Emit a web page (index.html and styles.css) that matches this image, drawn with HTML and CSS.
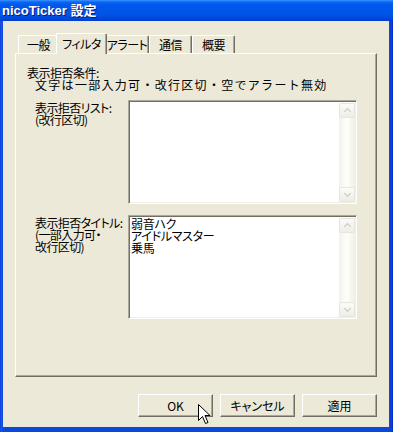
FILE: index.html
```html
<!DOCTYPE html>
<html lang="ja">

<head>
    <meta charset="UTF-8">
    <title>nicoTicker 設定</title>
    <link rel="stylesheet" href="styles.css">
</head>

<body>
    <div class="window">
        <div class="titlebar">nicoTicker 設定</div>

        <div class="client">
            <div class="tabs">
                <div class="tab tab-1">一般</div>
                <div class="tab tab-2 active">フィルタ</div>
                <div class="tab tab-3">アラート</div>
                <div class="tab tab-4">通信</div>
                <div class="tab tab-5">概要</div>
            </div>

            <div class="panel">
                <div class="cond">表示拒否条件:</div>
                <div class="cond-note">文字は一部入力可・改行区切・空でアラート無効</div>

                <div class="field first">
                    <label>表示拒否リスト:<br>(改行区切)</label>
                    <div class="textbox">
                        <div class="text"></div>
                        <div class="scroll">
                            <span class="arrow up"></span>
                            <span class="arrow down"></span>
                        </div>
                    </div>
                </div>

                <div class="field">
                    <label>表示拒否タイトル:<br>(一部入力可・<br>改行区切)</label>
                    <div class="textbox">
                        <div class="text">弱音ハク<br>アイドルマスター<br>乗馬</div>
                        <div class="scroll">
                            <span class="arrow up"></span>
                            <span class="arrow down"></span>
                        </div>
                    </div>
                </div>
            </div>

            <div class="buttons">
                <a class="btn" href="javascript:;">OK</a>
                <a class="btn" href="javascript:;">キャンセル</a>
                <a class="btn" href="javascript:;">適用</a>
            </div>
        </div>

        <!-- マウスカーソル -->
        <svg class="cursor" width="13" height="21" viewBox="0 0 13 21">
            <path d="M0.5 0.5 L0.5 16.5 L4.5 12.5 L7.5 19.5 L10 18.5 L7 11.5 L12 11.5 Z" fill="#fff" stroke="#000" stroke-width="1" stroke-linejoin="miter"/>
        </svg>
    </div>
</body>

</html>
```

FILE: styles.css
```css
* {
    margin: 0;
    padding: 0;
    box-sizing: border-box;
}

body {
    font-family: "Noto Sans CJK JP", sans-serif;
    font-size: 12px;
    line-height: 12px;
    color: #000;
    background: #fff;
    font-feature-settings: "palt";
    white-space: nowrap;
}

a {
    text-decoration: none;
    color: #000;
}

.window {
    position: relative;
    width: 393px;
    height: 432px;
    display: flex;
    flex-direction: column;
    background: linear-gradient(to right, #0831d9 0, #1a5ce6 1px, #0a49dc 3px, #0a49dc 389px, #0a3ed2 392px, #0019cf 393px);
}

.titlebar {
    height: 21px;
    padding-left: 2px;
    font-family: "Liberation Sans", "Noto Sans CJK JP", sans-serif;
    font-size: 13px;
    font-weight: bold;
    line-height: 22px;
    color: #fff;
    text-shadow: 1px 1px #0a1883;
    font-feature-settings: normal;
    background: linear-gradient(#3d95ff 0, #0a66f5 2px, #0058ee 5px, #0054e6 14px, #0047d8 19px, #003bc8 21px);
}

.client {
    flex: 1;
    margin: 0 4px 5px 3px;
    padding: 12px 12px 0 12px;
    background: #ece9d8;
    display: flex;
    flex-direction: column;
}

/* タブ */
.tabs {
    display: flex;
    align-items: flex-end;
    height: 20px;
    padding-left: 3px;
}

.tab {
    height: 18px;
    line-height: 16px;
    padding-top: 1px;
    text-align: center;
    letter-spacing: -0.5px;
    background: #ece9d8;
    border-top: 1px solid #fff;
    border-left: 1px solid #fff;
    border-right: 1px solid #716f64;
    border-top-right-radius: 2px;
    box-shadow: inset -1px 0 0 #aca899;
}

.tab-1 { width: 40px; border-right: none; box-shadow: none; }
.tab-2 { width: 51px; }
.tab-3 { width: 44px; }
.tab-4 { width: 43px; }
.tab-5 { width: 43px; }

.tab.active {
    position: relative;
    z-index: 2;
    height: 21px;
    margin: 0 -2px -1px -2px;
    padding-top: 2px;
}

/* パネル */
.panel {
    height: 324px;
    padding: 13px 0 0 11px;
    border-top: 1px solid #fff;
    border-left: 1px solid #fff;
    border-right: 1px solid #716f64;
    border-bottom: 1px solid #716f64;
    box-shadow: inset -1px -1px 0 #aca899;
}

.cond {
    letter-spacing: -0.5px;
}

.cond-note {
    margin-left: 8px;
    font-feature-settings: normal;
    letter-spacing: 1.3px;
}

.field {
    display: flex;
    margin-left: 8px;
    margin-top: 11px;
}

.field.first {
    margin-top: 9px;
}

.field label {
    width: 93px;
    padding-top: 2px;
    letter-spacing: -0.6px;
}

.textbox {
    display: flex;
    width: 229px;
    height: 104px;
    background: #fff;
    border-top: 1px solid #aca899;
    border-left: 1px solid #aca899;
    border-right: 1px solid #fff;
    border-bottom: 1px solid #fff;
    box-shadow: inset 1px 1px 0 #716f64, inset -1px -1px 0 #f1efe2;
}

.textbox .text {
    flex: 1;
    padding: 2px 0 0 2px;
    letter-spacing: -0.3px;
}

.scroll {
    width: 16px;
    margin: 2px 1px 1px 0;
    display: flex;
    flex-direction: column;
    justify-content: space-between;
    background: linear-gradient(to right, #f3f1ec, #fefefb 50%, #f0eee6);
}

.arrow {
    position: relative;
    display: block;
    width: 16px;
    height: 15px;
    border: 1px solid #e8e6dc;
    border-radius: 2px;
    background: linear-gradient(#fbfbf8, #eeede5);
}

.arrow::after {
    content: "";
    position: absolute;
    left: 5px;
    width: 4px;
    height: 4px;
    border-left: 1px solid #c9c7ba;
    border-top: 1px solid #c9c7ba;
}

.arrow.up::after {
    top: 5px;
    transform: rotate(45deg);
}

.arrow.down::after {
    top: 3px;
    transform: rotate(225deg);
}

/* ボタン */
.buttons {
    display: flex;
    justify-content: flex-end;
    gap: 7px;
    margin-top: 17px;
}

.btn {
    width: 75px;
    height: 23px;
    line-height: 21px;
    text-align: center;
    background: #ece9d8;
    border-top: 1px solid #fff;
    border-left: 1px solid #fff;
    border-right: 1px solid #716f64;
    border-bottom: 1px solid #716f64;
    box-shadow: inset -1px -1px 0 #aca899;
}

.cursor {
    position: absolute;
    left: 198px;
    top: 404px;
}
```
